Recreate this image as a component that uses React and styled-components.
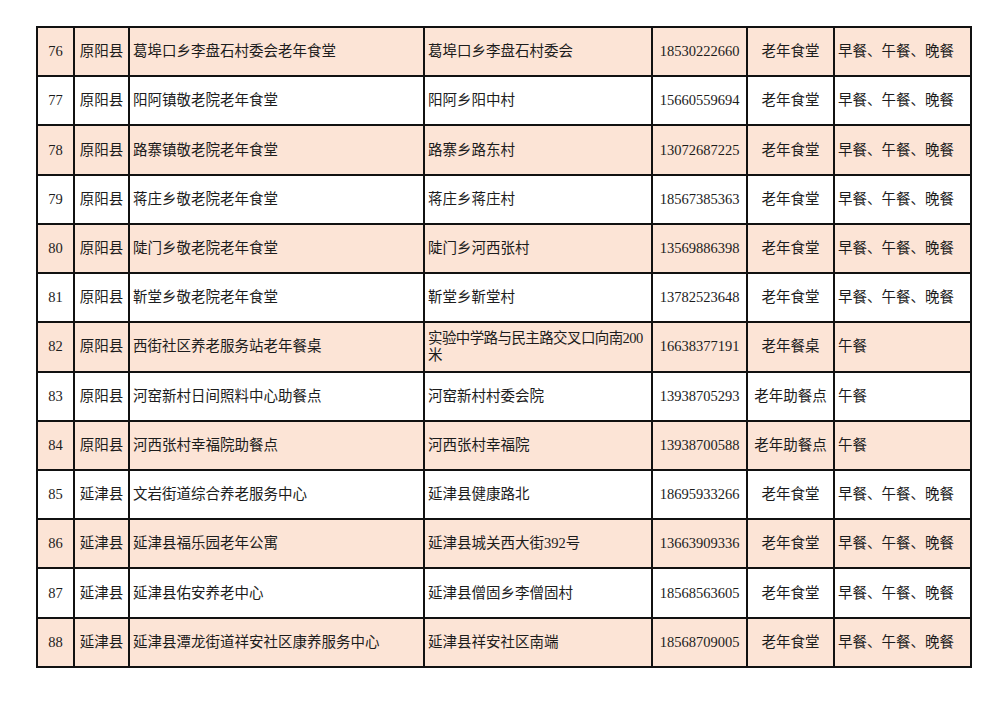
import React from 'react';
import styled, { createGlobalStyle } from 'styled-components';

const GlobalStyle = createGlobalStyle`
  html, body {
    margin: 0;
    padding: 0;
    background: #ffffff;
  }
  body {
    font-family: "Liberation Serif", "Noto Sans CJK SC", serif;
    color: #1c1c1c;
  }
`;

const Page = styled.div`
  width: 1000px;
  height: 706px;
  padding: 26px 0 0 36px;
  box-sizing: border-box;
  background: #ffffff;
`;

const Table = styled.table`
  width: 934px;
  border-collapse: collapse;
  table-layout: fixed;
  font-size: 14.5px;
`;

const Row = styled.tr`
  height: 49.23px;
  background: ${p => (p.$shaded ? '#fce4d6' : '#ffffff')};
`;

const Cell = styled.td`
  border: 2px solid #111111;
  padding: 0 3px;
  text-align: ${p => p.$align || 'left'};
  vertical-align: middle;
  line-height: 17px;
  white-space: nowrap;
  overflow: hidden;
  letter-spacing: ${p => (p.$tight ? '-0.6px' : 'normal')};
`;

const rows = [
  ['76', '原阳县', '葛埠口乡李盘石村委会老年食堂', '葛埠口乡李盘石村委会', '18530222660', '老年食堂', '早餐、午餐、晚餐'],
  ['77', '原阳县', '阳阿镇敬老院老年食堂', '阳阿乡阳中村', '15660559694', '老年食堂', '早餐、午餐、晚餐'],
  ['78', '原阳县', '路寨镇敬老院老年食堂', '路寨乡路东村', '13072687225', '老年食堂', '早餐、午餐、晚餐'],
  ['79', '原阳县', '蒋庄乡敬老院老年食堂', '蒋庄乡蒋庄村', '18567385363', '老年食堂', '早餐、午餐、晚餐'],
  ['80', '原阳县', '陡门乡敬老院老年食堂', '陡门乡河西张村', '13569886398', '老年食堂', '早餐、午餐、晚餐'],
  ['81', '原阳县', '靳堂乡敬老院老年食堂', '靳堂乡靳堂村', '13782523648', '老年食堂', '早餐、午餐、晚餐'],
  ['82', '原阳县', '西街社区养老服务站老年餐桌', ['实验中学路与民主路交叉口向南200', '米'], '16638377191', '老年餐桌', '午餐'],
  ['83', '原阳县', '河窑新村日间照料中心助餐点', '河窑新村村委会院', '13938705293', '老年助餐点', '午餐'],
  ['84', '原阳县', '河西张村幸福院助餐点', '河西张村幸福院', '13938700588', '老年助餐点', '午餐'],
  ['85', '延津县', '文岩街道综合养老服务中心', '延津县健康路北', '18695933266', '老年食堂', '早餐、午餐、晚餐'],
  ['86', '延津县', '延津县福乐园老年公寓', '延津县城关西大街392号', '13663909336', '老年食堂', '早餐、午餐、晚餐'],
  ['87', '延津县', '延津县佑安养老中心', '延津县僧固乡李僧固村', '18568563605', '老年食堂', '早餐、午餐、晚餐'],
  ['88', '延津县', '延津县潭龙街道祥安社区康养服务中心', '延津县祥安社区南端', '18568709005', '老年食堂', '早餐、午餐、晚餐'],
];

const widths = [37, 55, 295, 228, 95, 87, 137];

export default function App() {
  return (
    <>
      <GlobalStyle />
      <Page>
        <Table>
          <colgroup>
            {widths.map((w, i) => (
              <col key={i} style={{ width: w }} />
            ))}
          </colgroup>
          <tbody>
            {rows.map((r, i) => {
              const wrapped = Array.isArray(r[3]);
              return (
                <Row key={r[0]} $shaded={i % 2 === 0}>
                  <Cell $align="center">{r[0]}</Cell>
                  <Cell $align="center">{r[1]}</Cell>
                  <Cell>{r[2]}</Cell>
                  <Cell $tight={wrapped}>
                    {wrapped ? (
                      <>
                        {r[3][0]}
                        <br />
                        {r[3][1]}
                      </>
                    ) : (
                      r[3]
                    )}
                  </Cell>
                  <Cell $align="center">{r[4]}</Cell>
                  <Cell $align="center">{r[5]}</Cell>
                  <Cell>{r[6]}</Cell>
                </Row>
              );
            })}
          </tbody>
        </Table>
      </Page>
    </>
  );
}
